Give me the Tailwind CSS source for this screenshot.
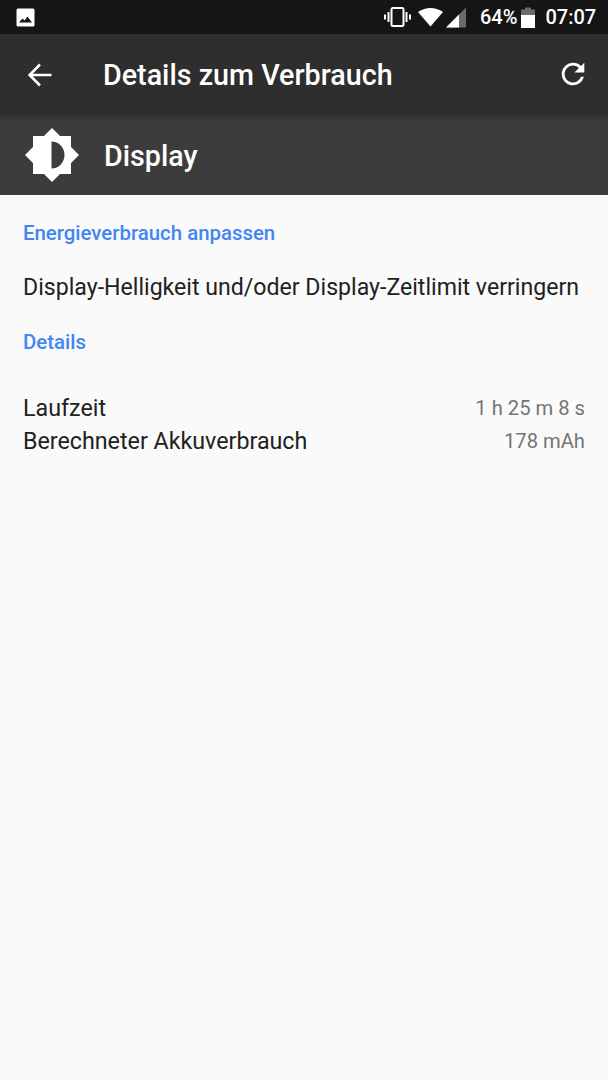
<!DOCTYPE html>
<html><head><meta charset="utf-8"><script src="https://cdn.jsdelivr.net/npm/@tailwindcss/browser@4"></script></head>
<body class="m-0">
<div class="w-[608px] h-[1080px] bg-[#fafafa] flex flex-col font-['Roboto',sans-serif] overflow-hidden">
  <div class="h-[34px] bg-[#151515] flex items-center text-white shrink-0">
    <svg class="ml-[16px] w-[19px] h-[19px]" viewBox="0 0 19 19"><rect x="0.5" y="0.5" width="18" height="18" rx="1.5" fill="#fff"/><path d="M3 14.5 L6.5 10.5 L8.5 12.5 L11.5 8.5 L16 14.5Z" fill="#151515"/></svg>
    <svg class="ml-[349px] w-[27px] h-[22px]" viewBox="0 0 27 22"><rect x="7.5" y="2" width="12" height="18" rx="1.5" fill="none" stroke="#fff" stroke-width="2"/><rect x="3.5" y="6" width="2" height="10" fill="#fff"/><rect x="21.5" y="6" width="2" height="10" fill="#fff"/><rect x="0" y="8.5" width="2" height="5" fill="#fff"/><rect x="25" y="8.5" width="2" height="5" fill="#fff"/></svg>
    <svg class="ml-[7px] w-[25px] h-[20px]" viewBox="0 0 25 20"><path d="M0 5 Q12.5 -3 25 5 L12.5 19.5Z" fill="#fff"/></svg>
    <svg class="ml-[3px] w-[20px] h-[21px]" viewBox="0 0 20 21"><path d="M0 20.5 L20 0.5 V20.5Z" fill="#6b6b6b"/><path d="M0 20.5 L13 7.5 V20.5Z" fill="#fff"/></svg>
    <span class="ml-[14px] text-[20px] font-medium leading-none">64%</span>
    <svg class="ml-[4px] w-[14px] h-[21px]" viewBox="0 0 14 21"><path d="M0 2.5 H4 V0.5 H10 V2.5 H14 V21 H0Z" fill="#6b6b6b"/><rect x="0" y="8" width="14" height="13" fill="#fff"/></svg>
    <span class="ml-[10px] text-[20px] font-medium leading-none">07:07</span>
  </div>
  <div class="h-[81px] bg-[#2e2e2e] flex items-center text-white shrink-0">
    <svg class="ml-[28px] w-[24px] h-[24px] mt-[1px]" viewBox="0 0 24 24"><path d="M23.5 12H2M12 1.5 1.5 12 12 22.5" fill="none" stroke="#fff" stroke-width="2.6"/></svg>
    <span class="ml-[51px] mt-[2px] text-[28.7px] font-medium leading-none">Details zum Verbrauch</span>
    <svg class="ml-auto mr-[18px] w-[34px] h-[34px] mt-[-2px]" viewBox="0 0 24 24"><path d="M17.65 6.35A7.96 7.96 0 0 0 12 4a8 8 0 1 0 7.73 10h-2.08A6 6 0 1 1 12 6c1.66 0 3.14.69 4.22 1.78L13 11h7V4l-2.35 2.35z" fill="#fff"/></svg>
  </div>
  <div class="h-[80px] bg-gradient-to-b from-[#2f2f2f] from-0% to-[#3c3c3c] to-[8%] flex items-center text-white shrink-0">
    <svg class="ml-[25px] w-[54px] h-[54px]" viewBox="0 0 54 54"><path fill-rule="evenodd" fill="#fff" d="M27 0 35 8H46V19L54 27 46 35V46H35L27 54 19 46H8V35L0 27 8 19V8H19ZM26.500 13.500V40.500C34 40.500 39.500 34.500 39.500 27S34 13.500 26.500 13.500Z"/></svg>
    <span class="ml-[25px] mt-[2px] text-[28.7px] font-medium leading-none">Display</span>
  </div>
  <div class="flex flex-col px-[23px]">
    <div class="mt-[26px] text-[20.4px] font-medium leading-[24px] text-[#4285f4]">Energieverbrauch anpassen</div>
    <div class="mt-[29px] text-[23.12px] leading-[28px] text-[#212121] whitespace-nowrap">Display-Helligkeit und/oder Display-Zeitlimit verringern</div>
    <div class="mt-[28px] text-[20.4px] font-medium leading-[24px] text-[#4285f4]">Details</div>
    <div class="mt-[38px] flex justify-between items-center h-[33px]"><span class="text-[23.25px] text-[#212121]">Laufzeit</span><span class="text-[20.2px] text-[#757575]">1 h 25 m 8 s</span></div>
    <div class="flex justify-between items-center h-[33px]"><span class="text-[23.25px] text-[#212121]">Berechneter Akkuverbrauch</span><span class="text-[20.2px] text-[#757575]">178 mAh</span></div>
  </div>
</div>
</body></html>
